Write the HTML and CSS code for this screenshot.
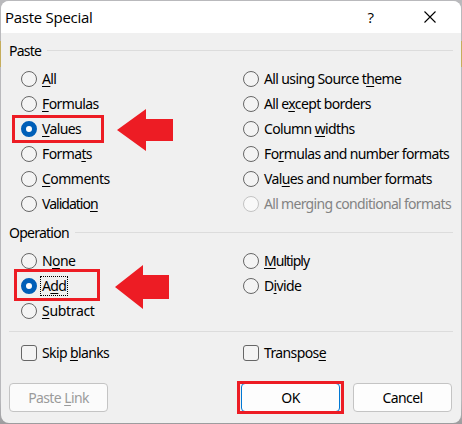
FILE: index.html
```html
<!DOCTYPE html>
<html lang="en">
<head>
<meta charset="utf-8">
<title>Paste Special</title>
<link rel="stylesheet" href="styles.css">
</head>
<body>
<main class="dialog">
  <header class="titlebar">
    <h1>Paste Special</h1>
    <span class="help">?</span>
    <svg class="close" width="12" height="12" viewBox="0 0 12 12"><path d="M.5 .5 11.5 11.5M11.5 .5 .5 11.5"/></svg>
  </header>
  <section class="group paste">
    <h2 class="legend"><span>Paste</span></h2>
    <div class="options">
      <div class="column">
        <div class="option"><i class="radio"></i><span><u>A</u>ll</span></div>
        <div class="option"><i class="radio"></i><span><u>F</u>ormulas</span></div>
        <div class="option"><i class="radio on"></i><span><u>V</u>alues</span></div>
        <div class="option"><i class="radio"></i><span>Forma<u>t</u>s</span></div>
        <div class="option loose"><i class="radio"></i><span><u>C</u>omments</span></div>
        <div class="option tight"><i class="radio"></i><span>Validatio<u>n</u></span></div>
      </div>
      <div class="column">
        <div class="option"><i class="radio"></i><span>All using Source t<u>h</u>eme</span></div>
        <div class="option"><i class="radio"></i><span>All e<u>x</u>cept borders</span></div>
        <div class="option"><i class="radio"></i><span>Column <u>w</u>idths</span></div>
        <div class="option"><i class="radio"></i><span>Fo<u>r</u>mulas and number formats</span></div>
        <div class="option"><i class="radio"></i><span>Val<u>u</u>es and number formats</span></div>
        <div class="option disabled"><i class="radio"></i><span>All merging conditional formats</span></div>
      </div>
    </div>
  </section>
  <section class="group operation">
    <h2 class="legend"><span>Operation</span></h2>
    <div class="options">
      <div class="column">
        <div class="option"><i class="radio"></i><span>N<u>o</u>ne</span></div>
        <div class="option"><i class="radio on"></i><span class="focused">A<u>d</u>d</span></div>
        <div class="option looser"><i class="radio"></i><span><u>S</u>ubtract</span></div>
      </div>
      <div class="column">
        <div class="option tight"><i class="radio"></i><span><u>M</u>ultiply</span></div>
        <div class="option"><i class="radio"></i><span>D<u>i</u>vide</span></div>
      </div>
    </div>
  </section>
  <section class="options checks">
    <div class="column"><div class="option"><i class="check"></i><span>Skip <u>b</u>lanks</span></div></div>
    <div class="column"><div class="option"><i class="check"></i><span>Transpos<u>e</u></span></div></div>
  </section>
  <footer class="buttons">
    <button class="link" disabled>Paste <u>L</u>ink</button>
    <button class="ok">OK</button>
    <button>Cancel</button>
  </footer>
</main>
<div class="mark mark-values"></div>
<div class="mark mark-add"></div>
<div class="mark mark-ok"></div>
<svg class="arrow arrow-values" width="56" height="42" viewBox="0 0 56 42"><path d="M0 21 29 0V10H56V32H29V42Z"/></svg>
<svg class="arrow arrow-add" width="54" height="44" viewBox="0 0 54 44"><path d="M0 22 28 0V10H54V34H28V44Z"/></svg>
</body>
</html>
```
FILE: styles.css
```css
* { box-sizing: border-box; }
body {
  margin: 0;
  width: 462px;
  height: 424px;
  padding: 1px;
  overflow: hidden;
  position: relative;
  background: linear-gradient(#b9b9bc 41px, #c5ad5c 41px 67px, #b9b9bc 67px 400px, #9c9c9e);
  font: 14px/20px "Noto Sans", sans-serif;
  color: #000;
}
.dialog {
  width: 460px;
  height: 422px;
  overflow: hidden;
  border-radius: 8px;
  background: #f0f0f0;
}
.titlebar {
  height: 32px;
  display: flex;
  align-items: center;
  padding: 0 25px 0 4px;
  background: #fff;
}
h1, h2 { margin: 0; font-weight: 400; }
h1 { flex: 1; font: 15px/20px "Open Sans", sans-serif; letter-spacing: -.27px; }
.help { font: 15px/20px "Open Sans", sans-serif; margin-right: 50px; }
.close { stroke: #000; stroke-width: 1.1; fill: none; }
.group { padding: 0 8px; }
.legend {
  display: flex;
  align-items: center;
  gap: 6px;
  height: 20px;
  font-size: 14px;
  line-height: 20px;
  letter-spacing: -.75px;
}
.legend::after { content: ""; flex: 1; height: 1px; background: #dcdcdc; margin-bottom: 2px; }
.paste { padding-top: 8px; }
.operation { padding-top: 7px; }
.options { display: grid; grid-template-columns: 222px 1fr; }
.group .options { padding: 5px 0 0 12px; }
.option { height: 25px; display: flex; align-items: center; gap: 5px; white-space: nowrap; letter-spacing: -.62px; }
.tight { letter-spacing: -.98px; }
.loose { letter-spacing: -.52px; }
.looser { letter-spacing: -.32px; }
u { text-decoration: underline; text-underline-offset: 2px; text-decoration-thickness: 1px; text-decoration-skip-ink: none; }
.radio, .check { flex: none; width: 16px; height: 16px; border: 1px solid #666; background: #f4f4f4; }
.radio { border-radius: 50%; }
.check { border-radius: 3px; }
.radio.on { border: 5px solid #005fb8; background: #fff; }
.disabled { color: #838383; letter-spacing: -.69px; }
.disabled .radio { border-color: #c3c3c3; background: #f9f9f9; }
.focused { line-height: 16px; outline: 1px dotted #000; outline-offset: 1px; }
.checks { margin: 8px 8px 0; padding: 8px 0 0 12px; border-top: 1px solid #dcdcdc; }
.buttons { display: flex; padding: 18px 8px 0; }
button {
  width: 99px;
  height: 29px;
  padding: 1px 0 0;
  border: 1px solid #c4c4c4;
  border-radius: 4px;
  background: #fdfdfd;
  font: 14px/20px "Noto Sans", sans-serif;
  letter-spacing: -.6px;
  color: #000;
}
.link { margin-right: 133px; color: #9b9b9b; background: #fbfbfb; }
.ok { margin-right: 13px; border-color: #0078d4; }
.mark { position: absolute; border: 3px solid #ed1c24; }
.mark-values { left: 12px; top: 115px; width: 92px; height: 28px; }
.mark-add { left: 14px; top: 269px; width: 86px; height: 32px; }
.mark-ok { left: 237px; top: 381px; width: 107px; height: 33px; }
.arrow { position: absolute; fill: #ed1c24; }
.arrow-values { left: 117px; top: 109px; }
.arrow-add { left: 115px; top: 265px; }
```
